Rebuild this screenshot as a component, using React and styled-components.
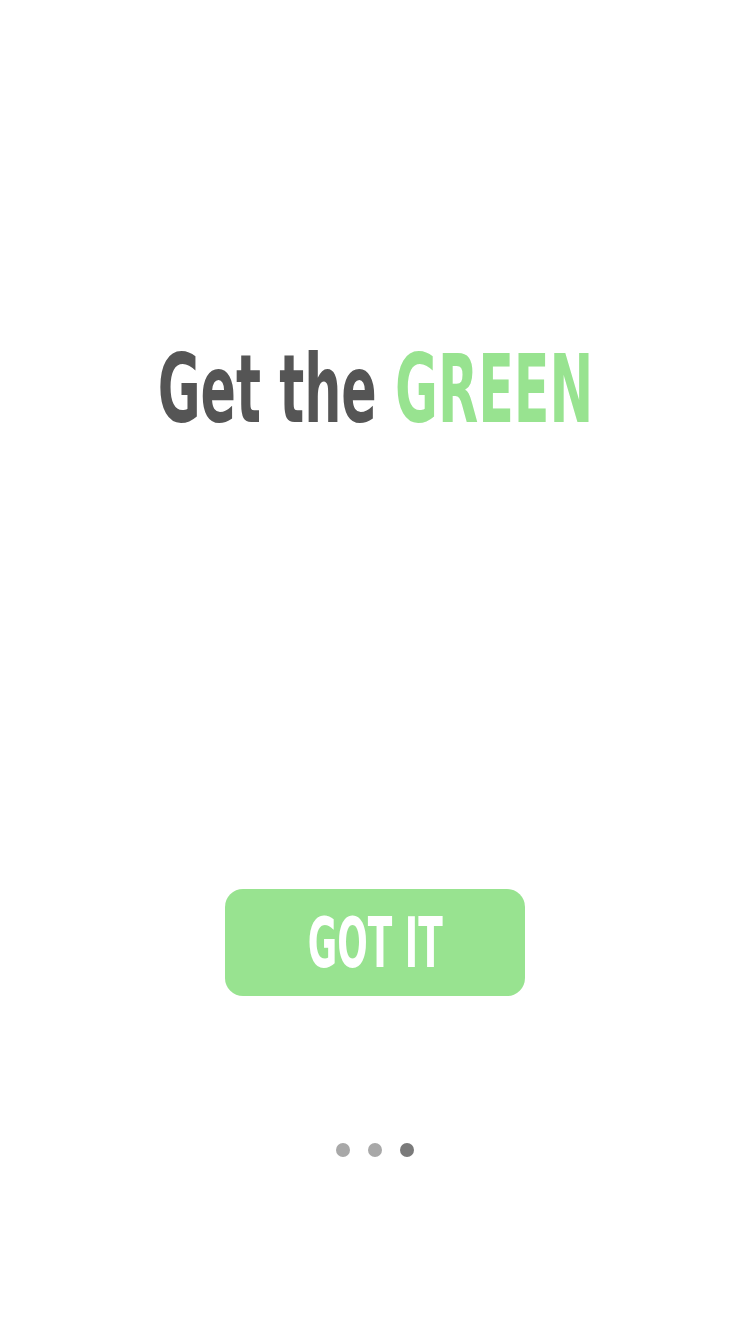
import styled, { createGlobalStyle } from "styled-components";

const GlobalStyle = createGlobalStyle`
  html, body {
    margin: 0;
    padding: 0;
    background: #ffffff;
  }
`;

const Screen = styled.main`
  width: 750px;
  height: 1334px;
  display: flex;
  flex-direction: column;
  align-items: center;
  font-family: "DejaVu Sans Condensed", "DejaVu Sans", sans-serif;
  font-stretch: condensed;
`;

const Title = styled.h1`
  margin: 340px 0 0;
  font-size: 94px;
  line-height: 100px;
  font-weight: 700;
  color: #555555;
  white-space: nowrap;
  transform: scaleX(0.618);
`;

const Accent = styled.span`
  color: #98e390;
`;

const Button = styled.button`
  margin-top: 449px;
  width: 300px;
  height: 107px;
  padding: 0;
  border: none;
  border-radius: 18px;
  background: #98e390;
  color: #ffffff;
  font-family: inherit;
  font-stretch: condensed;
  font-size: 70px;
  font-weight: 700;
  line-height: 1;
  cursor: pointer;
  display: flex;
  align-items: center;
  justify-content: center;
`;

const Label = styled.span`
  display: inline-block;
  white-space: nowrap;
  transform: scaleX(0.57);
`;

const Dots = styled.div`
  margin-top: 147px;
  display: flex;
  gap: 18px;
`;

const Dot = styled.span`
  width: 14px;
  height: 14px;
  border-radius: 50%;
  background: ${(p) => (p.$active ? "#7a7a7a" : "#a8a8a8")};
`;

export default function App() {
  return (
    <>
      <GlobalStyle />
      <Screen>
        <Title>
          Get the <Accent>GREEN</Accent>
        </Title>
        <Button>
          <Label>GOT IT</Label>
        </Button>
        <Dots>
          <Dot />
          <Dot />
          <Dot $active />
        </Dots>
      </Screen>
    </>
  );
}
